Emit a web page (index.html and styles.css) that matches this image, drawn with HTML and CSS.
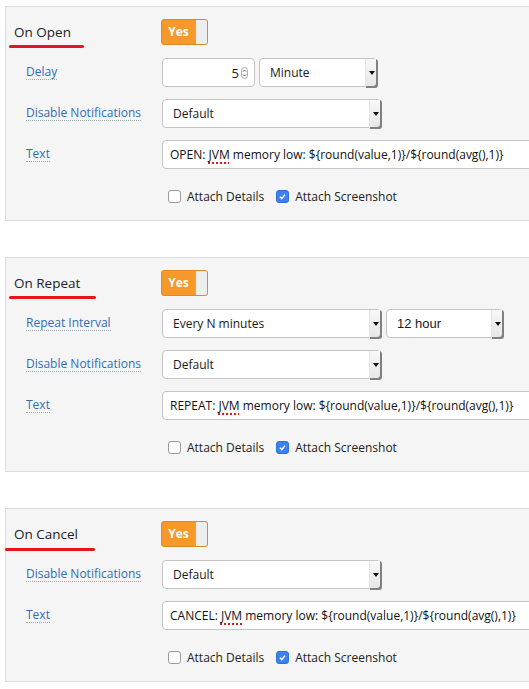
FILE: index.html
```html
<!DOCTYPE html>
<html>
<head>
<meta charset="utf-8">
<link rel="stylesheet" href="styles.css">
</head>
<body>
<div class="page">

  <section class="panel">
    <div class="head">
      <div class="title">On Open<span class="mark mark-open"></span></div>
      <div class="toggle"><span class="on">Yes</span><span class="knob"></span></div>
    </div>
    <div class="form">
      <div class="label"><span>Delay</span></div>
      <div class="controls">
        <div class="num"><span class="val">5</span><span class="spin"><svg width="7" height="12" viewBox="0 0 7 12"><rect x="0.5" y="0.5" width="6" height="11" rx="3" fill="#fff" stroke="#aaa"/><path d="M2 4.5 L3.5 3 L5 4.5 M2 7.5 L3.5 9 L5 7.5" fill="none" stroke="#444" stroke-width="0.9"/></svg></span></div>
        <div class="select w118"><span>Minute</span><span class="arrow"></span></div>
      </div>
      <div class="label"><span>Disable Notifications</span></div>
      <div class="controls">
        <div class="select w219"><span>Default</span><span class="arrow"></span></div>
      </div>
      <div class="label"><span>Text</span></div>
      <div class="controls">
        <div class="text"><span>OPEN: <span class="spell">JVM</span> memory low: ${round(value,1)}/${round(avg(),1)}</span></div>
      </div>
    </div>
    <div class="checks">
      <label class="check"><span class="box"></span>Attach Details</label>
      <label class="check"><span class="box checked"><svg width="9" height="9" viewBox="0 0 9 9"><path d="M2 4.8 L3.8 6.6 L7 2.6" fill="none" stroke="#fff" stroke-width="1.5"/></svg></span>Attach Screenshot</label>
    </div>
  </section>

  <section class="panel">
    <div class="head">
      <div class="title">On Repeat<span class="mark mark-repeat"></span></div>
      <div class="toggle"><span class="on">Yes</span><span class="knob"></span></div>
    </div>
    <div class="form">
      <div class="label"><span>Repeat Interval</span></div>
      <div class="controls">
        <div class="select w219"><span>Every N minutes</span><span class="arrow"></span></div>
        <div class="select w117 gap1"><span class="sans">12 hour</span><span class="arrow"></span></div>
      </div>
      <div class="label"><span>Disable Notifications</span></div>
      <div class="controls">
        <div class="select w219"><span>Default</span><span class="arrow"></span></div>
      </div>
      <div class="label"><span>Text</span></div>
      <div class="controls">
        <div class="text"><span>REPEAT: <span class="spell">JVM</span> memory low: ${round(value,1)}/${round(avg(),1)}</span></div>
      </div>
    </div>
    <div class="checks">
      <label class="check"><span class="box"></span>Attach Details</label>
      <label class="check"><span class="box checked"><svg width="9" height="9" viewBox="0 0 9 9"><path d="M2 4.8 L3.8 6.6 L7 2.6" fill="none" stroke="#fff" stroke-width="1.5"/></svg></span>Attach Screenshot</label>
    </div>
  </section>

  <section class="panel">
    <div class="head">
      <div class="title">On Cancel<span class="mark mark-cancel"></span></div>
      <div class="toggle"><span class="on">Yes</span><span class="knob"></span></div>
    </div>
    <div class="form">
      <div class="label"><span>Disable Notifications</span></div>
      <div class="controls">
        <div class="select w219"><span>Default</span><span class="arrow"></span></div>
      </div>
      <div class="label"><span>Text</span></div>
      <div class="controls">
        <div class="text"><span>CANCEL: <span class="spell">JVM</span> memory low: ${round(value,1)}/${round(avg(),1)}</span></div>
      </div>
    </div>
    <div class="checks">
      <label class="check"><span class="box"></span>Attach Details</label>
      <label class="check"><span class="box checked"><svg width="9" height="9" viewBox="0 0 9 9"><path d="M2 4.8 L3.8 6.6 L7 2.6" fill="none" stroke="#fff" stroke-width="1.5"/></svg></span>Attach Screenshot</label>
    </div>
  </section>

</div>
</body>
</html>
```

FILE: styles.css
```css
html, body {
  margin: 0;
  padding: 0;
  overflow: hidden;
  background: #fff;
}
body {
  font-family: "Open Sans", "Noto Sans", "Liberation Sans", sans-serif;
  font-size: 12px;
  color: #1a1a1a;
}
.page {
  padding: 6px 0 0 5px;
  display: flex;
  flex-direction: column;
  gap: 36px;
}
.panel {
  width: 580px;
  background: #f5f5f5;
  border: 1px solid #dcdcdc;
  padding: 11px 0 16px 0;
}
.head {
  display: grid;
  grid-template-columns: 155px auto;
  align-items: center;
  height: 26px;
  margin-bottom: 14px;
}
.title {
  position: relative;
  padding-left: 8px;
  font-size: 13.5px;
  color: #222;
  line-height: 26px;
  margin-top: 1px;
}
.mark {
  position: absolute;
  top: 26px;
  height: 3px;
  border-radius: 2px;
  background: #e8141b;
}
.mark-open { left: 3px; width: 75px; }
.mark-repeat { left: 3px; width: 87px; }
.mark-cancel { left: -1px; width: 90px; top: 27px; }
.toggle {
  display: flex;
  width: 47px;
  height: 26px;
  box-sizing: border-box;
  border: 1px solid #de8a22;
  border-radius: 3px;
  overflow: hidden;
  background: #f7982a;
}
.toggle .on {
  flex: 1;
  color: #fff;
  font-weight: bold;
  font-size: 12px;
  display: flex;
  align-items: center;
  justify-content: center;
}
.toggle .knob {
  width: 11px;
  background: #eeeeee;
  border-left: 1px solid #e0a060;
}
.form {
  display: grid;
  grid-template-columns: 156px auto;
  row-gap: 12px;
}
.label {
  padding-left: 20px;
  display: flex;
  align-items: center;
  height: 29px;
}
.label span {
  color: #2f6db5;
  border-bottom: 1px dotted #9aa;
  line-height: 15px;
  margin-top: -2px;
}
.controls {
  display: flex;
  gap: 4px;
  height: 29px;
}
.num, .select, .text {
  box-sizing: border-box;
  height: 29px;
  background: #fff;
  border: 1px solid #c4c4c4;
  border-radius: 4px;
  display: flex;
  align-items: center;
}
.num {
  width: 93px;
  justify-content: flex-end;
  padding-right: 6px;
  font-size: 13px;
}
.num .val { margin-right: 2px; }
.spin { display: flex; }
.select {
  position: relative;
  padding-left: 10px;
  justify-content: space-between;
}
.select .sans { font-family: "Liberation Sans", Arial, sans-serif; font-size: 13px; }
.select .arrow {
  position: relative;
  align-self: stretch;
  width: 12px;
  margin: 0 -2px -2px 0;
  background: linear-gradient(#f8f8f8, #e6e6e6);
  border-left: 1px solid #e4e4e4;
  border-radius: 0 3px 3px 0;
  box-shadow: inset -2px -2px 0 #808080;
}
.select .arrow::after {
  content: "";
  position: absolute;
  left: 3px;
  top: 12px;
  border-left: 3px solid transparent;
  border-right: 3px solid transparent;
  border-top: 4px solid #111;
}
.w118 { width: 118px; }
.w117 { width: 117px; }
.w219 { width: 219px; }
.gap1 { margin-left: 1px; }
.text {
  width: 420px;
  padding-left: 7px;
  white-space: nowrap;
  color: #111;
}
.spell {
  text-decoration: underline dotted #e01818;
  text-decoration-thickness: 2px;
  text-underline-offset: 3px;
}
.checks {
  display: flex;
  align-items: center;
  gap: 12px;
  margin: 19px 0 0 162px;
  height: 16px;
}
.check {
  display: flex;
  align-items: center;
  gap: 6px;
  color: #222;
}
.box {
  box-sizing: border-box;
  width: 13px;
  height: 13px;
  border: 1px solid #9a9a9a;
  border-radius: 3px;
  background: #fff;
  display: flex;
  align-items: center;
  justify-content: center;
}
.box.checked {
  background: #3b82f0;
  border-color: #2f6fd8;
}
```
